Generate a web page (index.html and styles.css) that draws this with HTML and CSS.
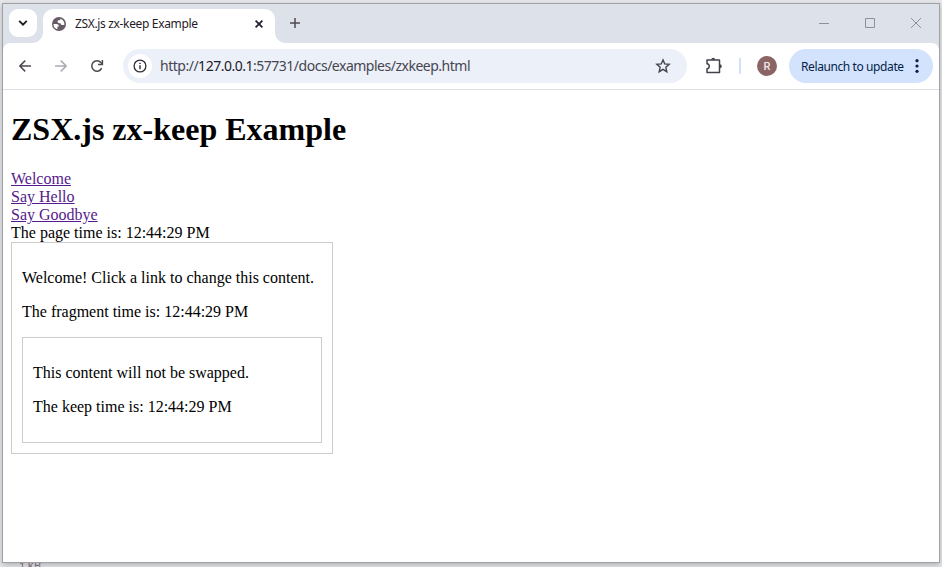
FILE: index.html
```html
<!DOCTYPE html>
<html lang="en">
<head>
<meta charset="utf-8">
<title>ZSX.js zx-keep Example</title>
<link rel="stylesheet" href="styles.css">
</head>
<body>
<div class="desktop">
  <div class="window">
    <header class="tabstrip">
      <span class="tab-search"><svg width="10" height="6" viewBox="0 0 10 6"><path d="M1.2 .9 5 4.6 8.800 .9" fill="none" stroke="#1c1b22" stroke-width="1.900"/></svg></span>
      <div class="tab">
        <svg width="14" height="14" viewBox="0 0 14 14"><circle cx="7" cy="7" r="7" fill="#655c66"/><path d="M1.500 6.900h2.800c1.900 0 2.600 1 2.600 2.500H5.400v2.900A5.500 5.500 0 0 1 1.500 6.900zM8.500 1.700c-.1 1-.6 1.500-1.600 1.500-.9 0-1.300.5-1.300 1.400 0 1.200.7 1.600 1.900 1.600h1c.3 1.400 1 1.900 2.100 1.900h1.700a5.500 5.500 0 0 0-3.800-6.400z" fill="#fff"/></svg>
        <span class="tab-title">ZSX.js zx-keep Example</span>
        <svg class="tab-close" width="8" height="8" viewBox="0 0 8 8"><path d="M.6.6l6.800 6.800M7.400.6.6 7.400" stroke="#1c1b2c" stroke-width="1.700"/></svg>
      </div>
      <svg class="new-tab" width="10" height="10" viewBox="0 0 10 10"><path d="M5 0v10M0 5h10" stroke="#514a52" stroke-width="1.500"/></svg>
      <div class="controls">
        <svg width="10" height="10" viewBox="0 0 10 10"><path d="M0 5.500h10"/></svg>
        <svg width="10" height="10" viewBox="0 0 10 10"><path d="M.5.5h9v9h-9z"/></svg>
        <svg width="10" height="10" viewBox="0 0 10 10"><path d="M0 0l10 10M10 0 0 10"/></svg>
      </div>
    </header>
    <nav class="toolbar">
      <svg class="nav-icon" width="12" height="12" viewBox="0 0 12 12"><path d="M6.200.6.9 6l5.300 5.400M1 6h11" stroke="#504951"/></svg>
      <svg class="nav-icon" width="12" height="12" viewBox="0 0 12 12"><path d="M5.800.6 11.100 6l-5.300 5.400M11 6H0" stroke="#adabb2"/></svg>
      <svg class="nav-icon" width="14" height="14" viewBox="0 0 14 14"><path d="M11.700 9.100A5.200 5.200 0 1 1 10.900 3.500L12.200 5" stroke="#504951"/><path d="M12.400 1v4.500H8" stroke="#504951"/></svg>
      <div class="address">
        <span class="site-info"><svg width="14" height="14" viewBox="0 0 14 14"><circle cx="7" cy="7" r="5.900" fill="none" stroke="#2f2b38" stroke-width="1.300"/><path d="M7 6.200v4M7 3.700v1.400" stroke="#2f2b38" stroke-width="1.400"/></svg></span>
        <span class="url">http://<b>127.0.0.1</b>:57731/docs/examples/zxkeep.html</span>
        <svg class="star" width="16" height="16" viewBox="0 0 16 16"><path d="M8 1.900l1.750 4.050 4.400.4-3.300 2.950.95 4.400L8 11.400l-3.800 2.300.95-4.400-3.300-2.950 4.400-.4z" fill="none" stroke="#46424c" stroke-width="1.400"/></svg>
      </div>
      <svg class="puzzle" width="18" height="18" viewBox="0 0 18 18"><path d="M2 3h12.500v12.500H2v-3.700c3-.2 3-4.800 0-5z" fill="none" stroke="#46424c" stroke-width="1.500" stroke-linejoin="round"/><path d="M6.200 2.800a2 2 0 0 1 4 0zM14.800 7.200a2 2 0 0 1 0 4z" fill="#46424c"/></svg>
      <span class="divider"></span>
      <span class="avatar">R</span>
      <div class="relaunch"><span class="relaunch-text">Relaunch to update</span><svg width="4" height="14" viewBox="0 0 4 14"><g fill="#041e49"><circle cx="2" cy="1.700" r="1.600"/><circle cx="2" cy="7" r="1.600"/><circle cx="2" cy="12.300" r="1.600"/></g></svg></div>
    </nav>
    <main class="page">
      <h1>ZSX.js zx-keep Example</h1>
      <div><a href="#">Welcome</a></div>
      <div><a href="#">Say Hello</a></div>
      <div><a href="#">Say Goodbye</a></div>
      <div>The page time is: 12:44:29 PM</div>
      <section class="box outer">
        <p>Welcome! Click a link to change this content.</p>
        <p>The fragment time is: 12:44:29 PM</p>
        <div class="box">
          <p>This content will not be swapped.</p>
          <p>The keep time is: 12:44:29 PM</p>
        </div>
      </section>
    </main>
  </div>
  <div class="behind">1 KB</div>
</div>
</body>
</html>
```
FILE: styles.css
```css
* { box-sizing: border-box; }
body { margin: 0; }
svg { display: block; flex: none; }
.desktop {
  height: 567px;
  overflow: hidden;
  padding: 3px 2px 0;
  background: #e8e9ec;
}
.window {
  position: relative;
  display: flex;
  flex-direction: column;
  height: 560px;
  border: 1px solid #a0a1a3;
  background: #dde1e9;
  box-shadow: 0 2px 6px rgba(0, 0, 0, .25);
}
.tabstrip {
  display: flex;
  flex: none;
  height: 39px;
  padding-left: 6px;
  font-family: "Noto Sans", sans-serif;
}
.tab-search {
  position: relative;
  z-index: 1;
  display: flex;
  align-items: center;
  justify-content: center;
  width: 28px;
  height: 28px;
  margin-top: 5px;
  border-radius: 9px;
  background: #fff;
}
.tab {
  position: relative;
  display: flex;
  align-items: center;
  width: 232px;
  height: 34px;
  margin: 5px 0 0 6px;
  padding: 0 12px 5px 9px;
  border-radius: 10px 10px 0 0;
  background: #fff;
}
.tab::before, .tab::after {
  content: "";
  position: absolute;
  bottom: 0;
  width: 10px;
  height: 10px;
}
.tab::before { left: -10px; background: radial-gradient(circle at 0 0, #dde1e9 9.500px, #fff 10px); }
.tab::after { right: -10px; background: radial-gradient(circle at 100% 0, #dde1e9 9.500px, #fff 10px); }
.tab-title {
  margin-left: 9px;
  font-size: 12px;
  letter-spacing: -.34px;
  white-space: nowrap;
  color: #1f1b27;
}
.tab-close { margin-left: auto; }
.new-tab { margin: 14px 0 0 15px; }
.controls {
  display: flex;
  gap: 36px;
  margin: 14px 18px 0 auto;
  fill: none;
  stroke: #8b909a;
}
.toolbar {
  display: flex;
  flex: none;
  align-items: center;
  height: 47px;
  padding: 0 6px 0 16px;
  border-radius: 7px 7px 0 0;
  box-shadow: inset 0 -1px #dfdfe1;
  padding-bottom: 1px;
  background: #fff;
  font-family: "Noto Sans", sans-serif;
}
.nav-icon { margin-right: 24px; fill: none; stroke-width: 1.500; }
.nav-icon:nth-child(2) { margin-right: 23px; }
.nav-icon:nth-child(3) { margin-right: 19px; }
.address {
  display: flex;
  align-items: center;
  width: 564px;
  height: 34px;
  padding: 0 16px 0 5px;
  border-radius: 17px;
  background: #ebf0f9;
}
.site-info {
  display: flex;
  align-items: center;
  justify-content: center;
  width: 24px;
  height: 24px;
  border-radius: 50%;
  background: #fff;
}
.url {
  margin-left: 8px;
  padding-bottom: 1px;
  font-size: 14px;
  letter-spacing: -.49px;
  white-space: nowrap;
  color: #474650;
}
.url b { font-weight: 400; color: #1f1b27; }
.star { margin-left: auto; }
.puzzle { margin-left: 18px; }
.divider { width: 2px; height: 16px; margin-left: 16px; background: #d0e1fc; }
.avatar {
  width: 20px;
  height: 20px;
  margin-left: 16px;
  border-radius: 50%;
  background: #8b6566;
  color: #f0e5e6;
  font: 500 11px/21px Roboto, sans-serif;
  text-align: center;
}
.relaunch {
  display: flex;
  align-items: center;
  justify-content: space-between;
  width: 144px;
  height: 34px;
  margin-left: auto;
  padding: 0 14px 0 12px;
  border-radius: 17px;
  background: #d3e3fd;
}
.relaunch-text {
  font-size: 12px;
  letter-spacing: -.4px;
  white-space: nowrap;
  color: #041e49;
}
.page {
  flex: 1;
  padding: 0 8px;
  background: #fff;
  font: 16px/18px "Liberation Serif", serif;
  color: #000;
}
.page h1 { margin: 0; padding: 20px 0 22px; font-size: 32px; line-height: 38px; }
.page a { color: #551a8b; }
.page p { margin: 16px 0; }
.box { display: flow-root; padding: 10px; border: 1px solid #ccc; }
.outer { width: 322px; }
.behind {
  margin: -4px 0 0 17px;
  font: 11px/14px "Noto Sans", sans-serif;
  letter-spacing: -.3px;
  color: #85758a;
}
```
